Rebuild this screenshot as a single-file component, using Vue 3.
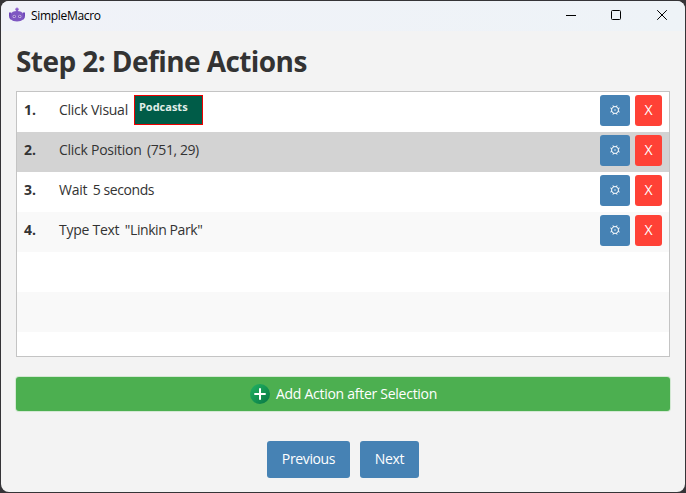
<script setup>
const actions = [
  { kind: 'Click Visual', visual: 'Podcasts' },
  { kind: 'Click Position', detail: '(751, 29)', selected: true },
  { kind: 'Wait', detail: '5 seconds' },
  { kind: 'Type Text', detail: '"Linkin Park"' },
]
</script>

<template>
  <div class="desktop">
    <div class="window">
      <header class="titlebar">
        <svg class="robot" width="16" height="16" viewBox="0 0 16 16">
          <circle cx="8" cy="2.2" r="1.7" fill="#9a70d4" />
          <path d="M7.3 2h1.4v4H7.3z" fill="#7e57c2" />
          <path d="M0 5.6h2.2v6.6H1.4Q0 11.4 0 8.8zM16 5.6h-2.2v6.6h.8Q16 11.4 16 8.8z" fill="#6d45b8" />
          <path d="M1.4 7.4Q3 4 8 4T14.6 7.4v4.8Q12 14.4 8 14.4T1.4 12.2z" fill="#7e57c2" />
          <circle cx="5.2" cy="9.4" r="1.6" fill="#c9b5e8" />
          <circle cx="10.8" cy="9.4" r="1.6" fill="#c9b5e8" />
          <circle cx="5.2" cy="9.4" r=".8" fill="#65419f" />
          <circle cx="10.8" cy="9.4" r=".8" fill="#65419f" />
        </svg>
        <span class="app-name">SimpleMacro</span>
        <div class="controls">
          <svg width="10" height="10" viewBox="0 0 10 10"><path d="M0 5.5h10" stroke="#000" /></svg>
          <svg width="10" height="10" viewBox="0 0 10 10"><rect x=".5" y=".5" width="9" height="9" rx="1" fill="none" stroke="#000" /></svg>
          <svg class="close" width="10" height="10" viewBox="0 0 10 10"><path d="M.2.2l9.6 9.6M9.8.2L.2 9.8" stroke="#000" /></svg>
        </div>
      </header>
      <main>
        <h1>Step 2: Define Actions</h1>
        <div class="list">
          <div v-for="(a, i) in actions" :key="i" class="row" :class="{ selected: a.selected }">
            <span class="index">{{ i + 1 }}.</span>
            <span class="kind">{{ a.kind }}</span>
            <span v-if="a.visual" class="visual">{{ a.visual }}</span>
            <span v-else class="detail">{{ a.detail }}</span>
            <button class="edit">
              <svg width="10" height="10" viewBox="0 0 10 10" fill="none" stroke="#fff">
                <circle cx="5" cy="5" r="3.5" />
                <circle cx="5" cy="5" r=".7" fill="#fff" stroke="none" />
                <path d="M8.2 6.4l1.4.6M6.4 8.2l.6 1.4M3.6 8.2L3 9.6M1.8 6.4L.4 7M1.8 3.6L.4 3M3.6 1.8L3 .4M6.4 1.8L7 .4M8.2 3.6L9.6 3" />
              </svg>
            </button>
            <button class="remove">X</button>
          </div>
          <div class="row"></div>
          <div class="row"></div>
          <div class="row"></div>
        </div>
        <button class="add">
          <svg width="20" height="20" viewBox="0 0 20 20">
            <defs>
              <linearGradient id="plus-fill" x1="0" y1="0" x2="1" y2="1">
                <stop offset="0" stop-color="#22b263" />
                <stop offset=".5" stop-color="#159653" />
                <stop offset="1" stop-color="#087444" />
              </linearGradient>
            </defs>
            <circle cx="10" cy="10" r="10" fill="url(#plus-fill)" />
            <path d="M10 4.3v11.4M4.3 10h11.4" stroke="#fff" stroke-width="2" />
          </svg>
          <span class="add-label">Add Action after Selection</span>
        </button>
        <nav>
          <button class="previous">Previous</button>
          <button class="next">Next</button>
        </nav>
      </main>
    </div>
  </div>
</template>

<style>
body { background: #302f32; overflow: hidden; }
</style>

<style scoped>
.desktop { box-sizing: border-box; width: 686px; height: 493px; padding: 1px; background: #353437; font-family: "Open Sans", "Noto Sans", sans-serif; font-size: 14px; color: #333; }
.window { width: 684px; height: 491px; border-radius: 8px; overflow: hidden; background: #f3f3f3; }
.titlebar { height: 30px; display: flex; align-items: center; background: linear-gradient(90deg, #f0f2f8, #eef3f7); padding: 0 18px 0 8px; }
.robot { flex: none; margin-top: -2px; }
.app-name { margin-left: 6px; color: #000; font-size: 12px; letter-spacing: -.32px; line-height: 16px; }
.controls { margin-left: auto; display: flex; gap: 35px; padding-bottom: 2px; }
.controls svg { display: block; }
.controls .close { margin-left: 1px; }
main { padding: 10px 15px 0; }
h1 { margin: 0; height: 50px; line-height: 40px; font-size: 28px; font-weight: 700; letter-spacing: -.57px; white-space: nowrap; }
.list { box-sizing: border-box; height: 266px; border: 1px solid #c4c4c4; overflow: hidden; background: #fff; }
.row { box-sizing: border-box; height: 40px; display: flex; align-items: flex-start; padding: 3px 7px; background: #fff; white-space: nowrap; line-height: 29px; }
.row:nth-child(even) { background: #f9f9f9; }
.row.selected { background: #d3d3d3; }
.index { width: 35px; font-weight: 700; }
.kind { letter-spacing: -.26px; }
.detail { margin-left: 5.5px; letter-spacing: -.42px; }
.visual { box-sizing: border-box; width: 69px; height: 30px; margin-left: 6px; border: 1px solid #ee0000; background: #005c48; color: #e2eee9; font-size: 11px; font-weight: 700; line-height: 21px; padding-left: 4px; }
button { box-sizing: border-box; border: 0; border-radius: 3px; padding: 0; margin: 0; font: inherit; color: #fff; display: flex; align-items: center; justify-content: center; }
.edit { width: 30px; height: 31px; margin-left: auto; padding-bottom: 1px; background: #4682b4; }
.remove { width: 27px; height: 31px; margin-left: 5px; padding-bottom: 2px; background: #ff4136; }
.add { width: 654px; height: 34px; margin-top: 20px; gap: 6px; background: #4caf50; box-shadow: 0 0 0 1px #d3e8d3; letter-spacing: -.27px; padding-left: 1px; }
.add-label { padding-bottom: 1px; }
nav { display: flex; justify-content: center; gap: 10px; margin-top: 30px; }
nav button { height: 37px; padding-bottom: 2px; background: #4682b4; letter-spacing: -.36px; }
.previous { width: 83px; }
.next { width: 59px; }
</style>
